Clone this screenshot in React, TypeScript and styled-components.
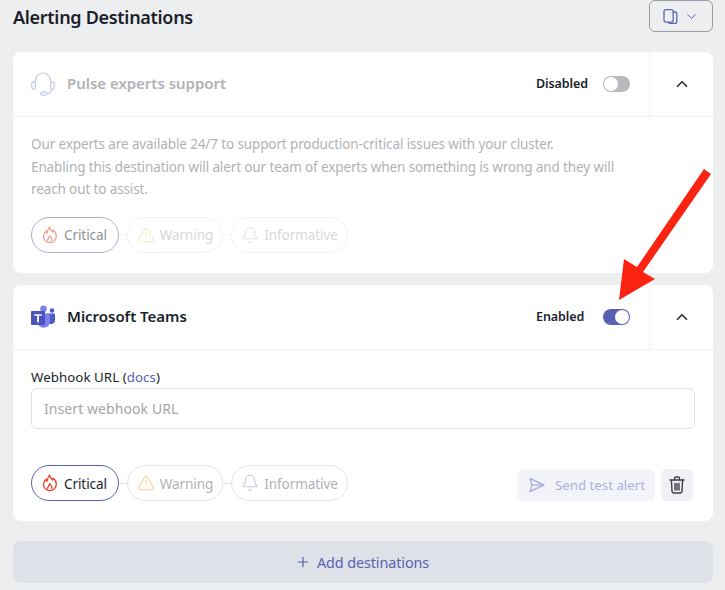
import styled, { createGlobalStyle } from "styled-components";
import { Bell, ChevronDown, ChevronUp, Plus, TriangleAlert } from "lucide-react";

const GlobalStyle = createGlobalStyle`
  html, body {
    margin: 0;
    padding: 0;
    background: #edeef0;
    font-family: "Noto Sans", "Open Sans", sans-serif;
    color: #1b1f2b;
  }
`;

const Page = styled.div`
  position: relative;
  width: 725px;
  height: 590px;
  overflow: hidden;
  box-sizing: border-box;
  padding: 0 12px 0 13px;
  display: flex;
  flex-direction: column;
`;

const TopBar = styled.div`
  display: flex;
  align-items: center;
  justify-content: space-between;
  height: 32px;
  margin-bottom: 20px;
`;

const Title = styled.h1`
  margin: 2px 0 0;
  font-size: 18px;
  font-weight: 600;
  letter-spacing: -0.3px;
  line-height: 30px;
`;

const CopyButton = styled.button`
  width: 64px;
  height: 32px;
  box-sizing: border-box;
  border: 1px solid #9a9ca3;
  border-radius: 6px;
  background: transparent;
  display: flex;
  align-items: center;
  justify-content: center;
  gap: 6px;
  padding: 0;
  color: #5c66b8;
`;

const Card = styled.section<{ $height: number }>`
  height: ${(p) => p.$height}px;
  background: #fff;
  border-radius: 8px;
  margin-bottom: 12px;
  display: flex;
  flex-direction: column;
`;

const CardHeader = styled.div`
  height: 65px;
  flex: none;
  box-sizing: border-box;
  display: flex;
  align-items: center;
  border-bottom: 1px solid #f1f2f4;
`;

const HeaderMain = styled.div`
  flex: 1;
  display: flex;
  align-items: center;
  padding-left: 18px;
`;

const IconSlot = styled.span`
  width: 24px;
  height: 26px;
  margin-right: 12px;
  display: flex;
  align-items: center;
  justify-content: center;
`;

const CardName = styled.span<{ $muted?: boolean }>`
  flex: 1;
  padding-bottom: 2px;
  font-size: 15px;
  font-weight: 600;
  letter-spacing: -0.03px;
  color: ${(p) => (p.$muted ? "#b1b2b6" : "#1b1f2b")};
`;

const StatusLabel = styled.span`
  width: 67px;
  padding-bottom: 1px;
  font-size: 12.5px;
  font-weight: 600;
  letter-spacing: -0.08px;
`;

const Toggle = styled.span<{ $on?: boolean }>`
  width: 27px;
  height: 16px;
  border-radius: 8px;
  background: ${(p) => (p.$on ? "#5862b0" : "#b9babe")};
  display: flex;
  justify-content: ${(p) => (p.$on ? "flex-end" : "flex-start")};
  margin-right: 19px;
  &::after {
    content: "";
    width: 14px;
    height: 14px;
    margin: 1px;
    border-radius: 50%;
    background: #fff;
  }
`;

const CollapseCell = styled.div`
  width: 64px;
  height: 100%;
  box-sizing: border-box;
  border-left: 1px solid #f1f2f4;
  display: flex;
  align-items: center;
  justify-content: center;
  color: #2b2e36;
`;

const Description = styled.p`
  margin: 16px 18px 0;
  font-size: 13.5px;
  line-height: 22.5px;
  letter-spacing: -0.12px;
  color: #b1b2b6;
`;

const LevelRow = styled.div`
  display: flex;
  align-items: center;
`;

const LevelWrap = styled(LevelRow)<{ $faded?: boolean }>`
  margin: 16px 18px 0;
  opacity: ${(p) => (p.$faded ? 0.5 : 1)};
`;

const Connector = styled.span`
  width: 8px;
  height: 1px;
  background: #e6e7ea;
`;

const LevelPill = styled.span<{ $active?: boolean }>`
  height: 36px;
  box-sizing: border-box;
  padding: 0 9px 0 10px;
  border-radius: 18px;
  border: 1px solid ${(p) => (p.$active ? "#5862b0" : "#e6e7ea")};
  display: flex;
  align-items: center;
  gap: 6px;
  font-size: 13.6px;
  letter-spacing: -0.12px;
  color: ${(p) => (p.$active ? "#1b1f2b" : "#b1b2b6")};
  &:first-child {
    padding-right: 11px;
  }
`;

const PillIcon = styled.span`
  width: 16px;
  height: 18px;
  display: flex;
  align-items: center;
  justify-content: center;
  svg {
    flex: none;
  }
`;

const FieldLabel = styled.div`
  margin: 18px 18px 0;
  font-size: 13.3px;
  line-height: 18px;
  letter-spacing: 0.05px;
  color: #1b1f2b;
`;

const DocsLink = styled.a`
  color: #5862b0;
`;

const UrlInput = styled.input`
  display: block;
  width: 664px;
  height: 41px;
  box-sizing: border-box;
  margin: 2px 18px 0;
  padding: 0 12px;
  border: 1px solid #dfe0e4;
  border-radius: 6px;
  background: #fff;
  font: inherit;
  font-size: 14px;
  letter-spacing: 0.08px;
  outline: none;
  &::placeholder {
    color: #a4a6ab;
    opacity: 1;
  }
`;

const Footer = styled.div`
  display: flex;
  align-items: flex-end;
  justify-content: space-between;
  margin: 36px 20px 0 18px;
`;

const FooterActions = styled.div`
  display: flex;
  gap: 6px;
`;

const TestButton = styled.button`
  height: 32px;
  box-sizing: border-box;
  border: 0;
  border-radius: 6px;
  background: #f3f3fa;
  display: flex;
  align-items: center;
  gap: 10px;
  padding: 0 10px 0 12px;
  font: inherit;
  font-size: 13.3px;
  letter-spacing: -0.02px;
  color: #adb1dc;
`;

const TrashButton = styled.button`
  width: 32px;
  height: 32px;
  border: 0;
  border-radius: 6px;
  background: #f0f0f6;
  padding: 0;
  display: flex;
  align-items: center;
  justify-content: center;
`;

const AddButton = styled.button`
  height: 42px;
  margin-top: 8px;
  padding: 0 2px 0 0;
  border: 0;
  border-radius: 8px;
  background: #dfe1e9;
  display: flex;
  align-items: center;
  justify-content: center;
  gap: 6px;
  font: inherit;
  font-size: 14.4px;
  letter-spacing: -0.1px;
  color: #5862b0;
`;

const Arrow = styled.svg`
  position: absolute;
  left: 610px;
  top: 160px;
`;

function HeadsetIcon() {
  return (
    <svg width="24" height="24" viewBox="0 0 24 24" fill="none" stroke="#c6c9e6" strokeWidth="1.2">
      <path d="M4.3 9.5C4.3 4.3 7.8 1 12 1s7.7 3.3 7.7 8.5" />
      <rect x="0.8" y="9.6" width="3.6" height="7.8" rx="1.8" />
      <rect x="19.6" y="9.6" width="3.6" height="7.8" rx="1.8" />
      <path d="M20.6 17.5c0 2.4-1.6 3.8-5 4" />
      <rect x="9.6" y="20.2" width="6" height="3" rx="1.5" />
    </svg>
  );
}

function CopyIcon() {
  return (
    <svg width="15" height="15" viewBox="0 0 15 15" fill="none" stroke="currentColor" strokeWidth="1.3">
      <path d="M10.2 3h1.6a2 2 0 0 1 2 2v7.5a2 2 0 0 1-2 2H7a2 2 0 0 1-1.900-1.400" />
      <rect x="1" y="0.7" width="9.2" height="12.4" rx="2" />
    </svg>
  );
}

function FlameIcon() {
  return (
    <svg width="16" height="18" viewBox="0 0 16 18" fill="none" stroke="#e8401c" strokeWidth="1.3" strokeLinejoin="round" strokeLinecap="round">
      <path d="M7.6 1c.5 2.600 1.600 3.800 3 5 .4-.6.6-1.100.7-1.900 1.800 1.600 3 3.700 3 6 0 3.900-2.800 6.600-6.400 6.600S1.500 14 1.500 10.400c0-2.200 1-3.800 2.400-5.200.2.900.5 1.500 1 2C5.400 5 6.200 3 7.600 1z" />
      <path d="M5.600 14.800c-.5-1.800 1.500-3 2.200-5 .8 1.600 2.700 3 2.200 5" />
    </svg>
  );
}

function SendIcon() {
  return (
    <svg width="16" height="16" viewBox="0 0 16 16" fill="none" stroke="currentColor" strokeWidth="1.4" strokeLinejoin="round">
      <path d="M1 1.500 15 8 1 14.500 3 8z" />
      <path d="M3 8h12" />
    </svg>
  );
}

function TrashIcon() {
  return (
    <svg width="16" height="18" viewBox="0 0 16 18" fill="none" stroke="#3c3f46" strokeWidth="1.4" strokeLinecap="round">
      <path d="M1 4h14" />
      <path d="M5.500 3.800V2.400c0-.8.600-1.400 1.300-1.400h2.400c.7 0 1.300.6 1.300 1.400v1.400" />
      <path d="M2.400 4.200 3 15c.1 1.200.9 2 2 2h6c1.100 0 1.900-.8 2-2l.6-10.800" />
      <path d="M6 7.500v6.500M8 7.500v6.500M10 7.500v6.500" />
    </svg>
  );
}

function TeamsLogo() {
  return (
    <svg width="24" height="24" viewBox="0 0 24 24">
      <circle cx="21" cy="5.500" r="2.300" fill="#5059c9" />
      <path d="M16 8.500h7.200a.8.800 0 0 1 .8.800v5.700a4 4 0 0 1-4 4h-4z" fill="#5059c9" />
      <circle cx="12.500" cy="3.800" r="3.300" fill="#7b83eb" />
      <path d="M7 8.500h11a1 1 0 0 1 1 1V17a6.300 6.300 0 0 1-12 2z" fill="#7b83eb" />
      <rect x="0" y="6" width="14" height="14" rx="1" fill="#4b53bc" />
      <path d="M3.200 9.300h7.600v1.500H7.900v6.500H6.100v-6.500H3.200z" fill="#fff" />
    </svg>
  );
}

function Levels() {
  return (
    <>
      <LevelPill $active>
        <PillIcon>
          <FlameIcon />
        </PillIcon>
        Critical
      </LevelPill>
      <Connector />
      <LevelPill>
        <PillIcon>
          <TriangleAlert size={18} color="#fbd38d" strokeWidth={1.5} />
        </PillIcon>
        Warning
      </LevelPill>
      <Connector />
      <LevelPill>
        <PillIcon>
          <Bell size={18} color="#c3c7e6" strokeWidth={1.5} />
        </PillIcon>
        Informative
      </LevelPill>
    </>
  );
}

export default function App() {
  return (
    <Page>
      <GlobalStyle />
      <TopBar>
        <Title>Alerting Destinations</Title>
        <CopyButton>
          <CopyIcon />
          <ChevronDown size={15} strokeWidth={1.6} />
        </CopyButton>
      </TopBar>

      <Card $height={221}>
        <CardHeader>
          <HeaderMain>
            <IconSlot>
              <HeadsetIcon />
            </IconSlot>
            <CardName $muted>Pulse experts support</CardName>
            <StatusLabel>Disabled</StatusLabel>
            <Toggle />
          </HeaderMain>
          <CollapseCell>
            <ChevronUp size={18} strokeWidth={2.2} />
          </CollapseCell>
        </CardHeader>
        <Description>
          Our experts are available 24/7 to support production-critical issues with your cluster.
          <br />
          Enabling this destination will alert our team of experts when something is wrong and they will
          <br />
          reach out to assist.
        </Description>
        <LevelWrap $faded>
          <Levels />
        </LevelWrap>
      </Card>

      <Card $height={236}>
        <CardHeader>
          <HeaderMain>
            <IconSlot>
              <TeamsLogo />
            </IconSlot>
            <CardName>Microsoft Teams</CardName>
            <StatusLabel>Enabled</StatusLabel>
            <Toggle $on />
          </HeaderMain>
          <CollapseCell>
            <ChevronUp size={18} strokeWidth={2.2} />
          </CollapseCell>
        </CardHeader>
        <FieldLabel>
          Webhook URL (<DocsLink>docs</DocsLink>)
        </FieldLabel>
        <UrlInput placeholder="Insert webhook URL" />
        <Footer>
          <LevelRow>
            <Levels />
          </LevelRow>
          <FooterActions>
            <TestButton>
              <SendIcon />
              Send test alert
            </TestButton>
            <TrashButton>
              <TrashIcon />
            </TrashButton>
          </FooterActions>
        </Footer>
      </Card>

      <AddButton>
        <Plus size={16} strokeWidth={1.8} />
        Add destinations
      </AddButton>

      <Arrow width="104" height="145" viewBox="0 0 104 145">
        <path d="M94 9 L101 14 L33 112 L45 119 L9 140 L14 99 L27 107 Z" fill="#fb2412" />
      </Arrow>
    </Page>
  );
}
